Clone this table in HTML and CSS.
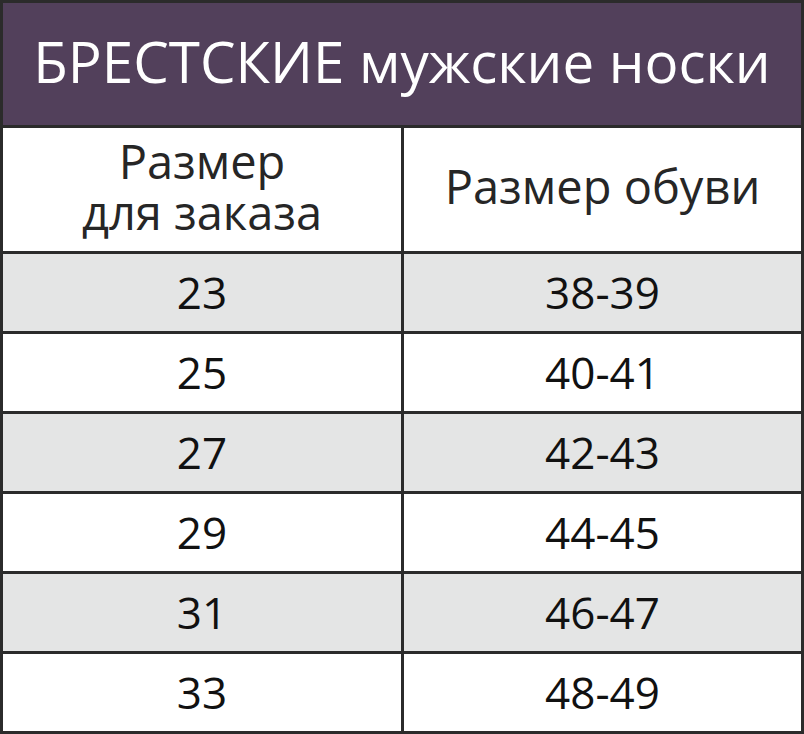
FILE: index.html
```html
<!DOCTYPE html>
<html lang="ru">
<head>
<meta charset="utf-8">
<title>БРЕСТСКИЕ мужские носки</title>
<link rel="stylesheet" href="styles.css">
</head>
<body>
<div class="sheet">
  <div class="title">БРЕСТСКИЕ мужские носки</div>
  <div class="cell head">Размер<br>для заказа</div>
  <div class="cell head">Размер обуви</div>
  <div class="cell num alt">23</div><div class="cell num alt">38-39</div>
  <div class="cell num">25</div><div class="cell num">40-41</div>
  <div class="cell num alt">27</div><div class="cell num alt">42-43</div>
  <div class="cell num">29</div><div class="cell num">44-45</div>
  <div class="cell num alt">31</div><div class="cell num alt">46-47</div>
  <div class="cell num">33</div><div class="cell num">48-49</div>
</div>
</body>
</html>
```
FILE: styles.css
```css
html, body {
  margin: 0;
  padding: 0;
  background: #ffffff;
}
.sheet {
  width: 804px;
  height: 734px;
  box-sizing: border-box;
  padding: 3px;
  background: #2b2b2b;
  display: grid;
  grid-template-columns: 398px 397px;
  grid-template-rows: 122px 123px repeat(6, 77px);
  gap: 3px;
  font-family: "Open Sans", "DejaVu Sans", sans-serif;
}
.title {
  grid-column: 1 / 3;
  background: #52405b;
  color: #ffffff;
  font-size: 56.5px;
  display: flex;
  align-items: center;
  justify-content: center;
  padding-bottom: 6px;
  box-sizing: border-box;
}
.cell {
  background: #ffffff;
  display: flex;
  align-items: center;
  justify-content: center;
  text-align: center;
}
.head {
  color: #262626;
  font-size: 47px;
  line-height: 51px;
  padding-bottom: 6px;
  box-sizing: border-box;
}
.num {
  color: #111111;
  font-size: 44px;
  padding-bottom: 2px;
  box-sizing: border-box;
}
.alt {
  background: #e4e5e5;
}
```
